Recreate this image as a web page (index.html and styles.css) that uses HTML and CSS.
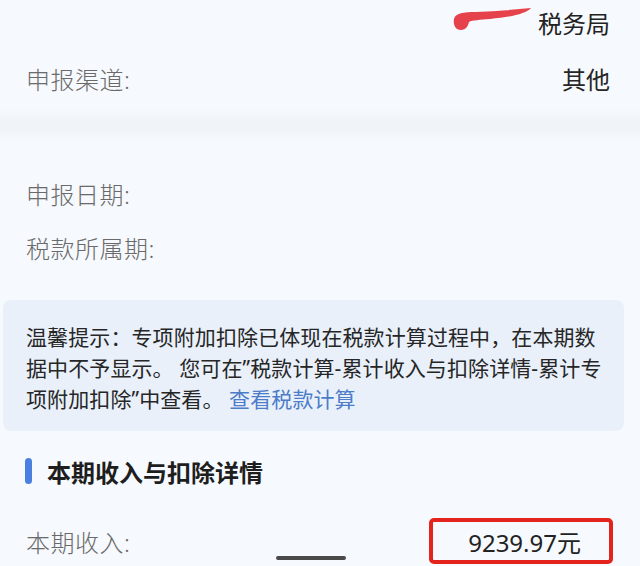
FILE: index.html
```html
<!DOCTYPE html>
<html lang="zh-CN">
<head>
<meta charset="utf-8">
<link rel="stylesheet" href="styles.css">
</head>
<body>
<div class="page">
  <div class="top-row">
    <svg class="smudge" width="80" height="24" viewBox="0 0 80 24"><path d="M2 12 C3 6 12 5 24 5 C42 4 60 3 79 1 C74 7 58 10 38 12 C28 13 20 13 17 15 C16 19 14 23 9 23 C3 23 1 17 2 12 Z" fill="#e5424c"/></svg>
    <span class="bureau">税务局</span>
  </div>
  <div class="row first">
    <span class="label">申报渠道:</span>
    <span class="value">其他</span>
  </div>
  <div class="band"></div>
  <div class="card">
    <div class="row"><span class="label">申报日期:</span></div>
    <div class="row"><span class="label">税款所属期:</span></div>
  </div>
  <p class="tip">温馨提示：专项附加扣除已体现在税款计算过程中，在本期数据中不予显示。 您可在”税款计算-累计收入与扣除详情-累计专项附加扣除”中查看。 <a class="link">查看税款计算</a></p>
  <div class="heading"><span class="bar"></span><span>本期收入与扣除详情</span></div>
  <div class="income-row">
    <span class="label">本期收入:</span>
    <span class="amount">9239.97元</span>
  </div>
  <div class="home-bar"></div>
</div>
</body>
</html>
```
FILE: styles.css
```css
html, body {
  margin: 0;
  padding: 0;
  background: #f6f9fd;
}
body {
  font-family: "Noto Sans", "Noto Sans CJK SC", sans-serif;
  color: #222;
  overflow: hidden;
}
.page {
  position: relative;
  width: 640px;
  height: 566px;
  overflow: hidden;
}
.top-row {
  height: 48px;
  display: flex;
  justify-content: flex-end;
  align-items: center;
  padding-right: 30px;
}
.smudge {
  align-self: flex-start;
  margin-top: 7px;
  margin-right: 6px;
}
.bureau {
  font-size: 24px;
  line-height: 48px;
  color: #222;
}
.row {
  height: 54px;
  display: flex;
  align-items: center;
  justify-content: space-between;
  padding: 0 30px 0 26px;
}
.row.first {
  height: 60px;
}
.label {
  font-size: 24px;
  color: #6a6a6a;
  font-weight: 300;
  letter-spacing: 0.5px;
}
.value {
  font-size: 24px;
  color: #262626;
}
.band {
  height: 34px;
  background: linear-gradient(#f6f9fd, #f0f4f9 40%, #f0f4f9 60%, #f6f9fd);
}
.card {
  padding: 24px 0 26px;
}
.tip {
  margin: 0 16px 0 3px;
  background: #e9f0fa;
  border-radius: 8px;
  padding: 22px 16px 16px 23px;
  font-size: 21px;
  line-height: 31px;
  color: #262626;
  letter-spacing: 0.1px;
}
.link {
  color: #4d7cc8;
  text-decoration: none;
}
.heading {
  height: 48px;
  margin-top: 16px;
  display: flex;
  align-items: center;
  gap: 15px;
  padding-left: 25px;
  font-size: 24px;
  font-weight: 700;
  color: #1e1e1e;
}
.bar {
  width: 7px;
  height: 26px;
  border-radius: 4px;
  background: #4b80e2;
}
.income-row {
  margin-top: 23px;
  display: flex;
  align-items: center;
  justify-content: space-between;
  padding: 0 27px 0 26px;
}
.amount {
  height: 38px;
  border: 4px solid #e3231c;
  border-radius: 5px;
  display: flex;
  align-items: center;
  justify-content: flex-end;
  padding-right: 28px;
  box-sizing: content-box;
  width: 148px;
  font-size: 24px;
  color: #222;
}
.home-bar {
  position: absolute;
  left: 276px;
  top: 556px;
  width: 70px;
  height: 4px;
  border-radius: 2px;
  background: #4a4a4a;
}
```
